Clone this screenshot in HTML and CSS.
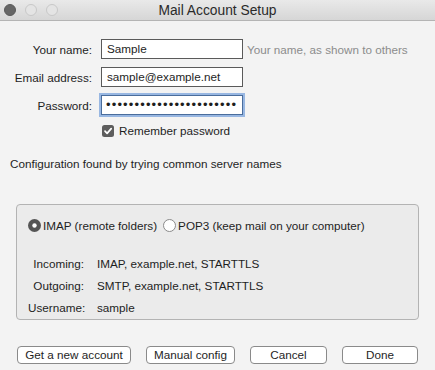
FILE: index.html
```html
<!DOCTYPE html>
<html>
<head>
<meta charset="utf-8">
<link rel="stylesheet" href="styles.css">
</head>
<body>
<div class="window">
  <div class="titlebar">
    <div class="lights">
      <span class="light close"></span>
      <span class="light"></span>
      <span class="light"></span>
    </div>
    <div class="title">Mail Account Setup</div>
  </div>
  <div class="content">
    <div class="form">
      <label class="lbl">Your name:</label>
      <div class="field">Sample</div>
      <div class="hint">Your name, as shown to others</div>
      <label class="lbl">Email address:</label>
      <div class="field">sample@example.net</div>
      <div></div>
      <label class="lbl">Password:</label>
      <div class="field focused dots">•••••••••••••••••••••••</div>
      <div></div>
      <div></div>
      <div class="check-row">
        <svg class="checkbox" width="12" height="12" viewBox="0 0 12 12"><rect x="0" y="0" width="12" height="12" rx="2.5" fill="#5d5d5d"/><path d="M3 6.2 L5.1 8.4 L9.2 3.6" fill="none" stroke="#fff" stroke-width="1.7" stroke-linecap="round" stroke-linejoin="round"/></svg>
        <span>Remember password</span>
      </div>
      <div></div>
    </div>
    <div class="status">Configuration found by trying common server names</div>
    <div class="group">
      <div class="radios">
        <div class="radio-item">
          <svg width="13" height="13" viewBox="0 0 13 13"><circle cx="6.5" cy="6.5" r="6.5" fill="#555"/><circle cx="6.5" cy="6.5" r="2.2" fill="#fff"/></svg>
          <span>IMAP (remote folders)</span>
        </div>
        <div class="radio-item">
          <svg width="13" height="13" viewBox="0 0 13 13"><circle cx="6.5" cy="6.5" r="6" fill="#fff" stroke="#8a8a8a" stroke-width="1"/></svg>
          <span>POP3 (keep mail on your computer)</span>
        </div>
      </div>
      <div class="details">
        <div class="dl">Incoming:</div><div>IMAP, example.net, STARTTLS</div>
        <div class="dl">Outgoing:</div><div>SMTP, example.net, STARTTLS</div>
        <div class="dl">Username:</div><div>sample</div>
      </div>
    </div>
    <div class="buttons">
      <button class="btn b1">Get a new account</button>
      <button class="btn b2">Manual config</button>
      <button class="btn b3">Cancel</button>
      <button class="btn b4">Done</button>
    </div>
  </div>
</div>
</body>
</html>
```
FILE: styles.css
```css
html, body {
  margin: 0;
  padding: 0;
  background: #f3f3f3;
}
body {
  font-family: "Liberation Sans", Arial, sans-serif;
  font-size: 11.7px;
  line-height: 15px;
  color: #1e1e1e;
  width: 435px;
  height: 370px;
  overflow: hidden;
}
.titlebar {
  height: 20px;
  border-bottom: 1px solid #b4b4b4;
  background: linear-gradient(#e9e9e9, #d6d6d6);
  display: flex;
  align-items: center;
  position: relative;
}
.lights {
  display: flex;
  gap: 9px;
  padding-left: 4px;
}
.light {
  width: 10px;
  height: 10px;
  border-radius: 50%;
  border: 1px solid #c8c8c8;
  background: #e4e4e4;
}
.light.close {
  background: #666;
  border-color: #5a5a5a;
}
.title {
  position: absolute;
  left: 0;
  right: 0;
  top: 0;
  line-height: 21px;
  text-align: center;
  color: #2a2a2a;
  font-size: 13.8px;
}
.content {
  padding-top: 18px;
}
.form {
  display: grid;
  grid-template-columns: 97px 142px 1fr;
  column-gap: 4px;
  row-gap: 8px;
  align-items: center;
}
.lbl {
  text-align: right;
  padding-right: 5px;
}
.field {
  height: 18px;
  border: 1px solid #5a5a5a;
  background: #fff;
  line-height: 18px;
  padding-left: 5px;
  white-space: nowrap;
  overflow: hidden;
}
.field.focused {
  border-color: #4a6d9c;
  box-shadow: 0 0 0 2px #98b7e2;
}
.field.dots {
  font-size: 13px;
  letter-spacing: 1.15px;
  padding-left: 4px;
}
.hint {
  color: #8c8c8c;
  white-space: nowrap;
}
.check-row {
  display: flex;
  align-items: center;
  gap: 5px;
  padding-left: 1px;
}
.status {
  margin-top: 18px;
  padding-left: 10px;
}
.group {
  margin: 33px 16px 0 16px;
  height: 116px;
  box-sizing: border-box;
  border: 1px solid #b3b3b3;
  border-radius: 4px;
  background: #ebebeb;
  padding: 14px 0 0 11px;
}
.radios {
  display: flex;
  gap: 6px;
  height: 13px;
  align-items: center;
}
.radio-item {
  display: flex;
  align-items: center;
  gap: 2px;
}
.details {
  display: grid;
  grid-template-columns: 56px 1fr;
  column-gap: 13px;
  margin-top: 21px;
  line-height: 22px;
}
.dl {
  text-align: right;
}
.buttons {
  display: flex;
  gap: 15px;
  margin: 26px 0 0 17px;
}
.btn {
  font-family: "Liberation Sans", Arial, sans-serif;
  font-size: 11.7px;
  color: #1e1e1e;
  height: 18px;
  padding: 0;
  background: #fff;
  border: 1px solid #8a8a8a;
  border-radius: 4px;
  line-height: 16px;
}
.b1 { width: 114px; }
.b2 { width: 89px; }
.b3 { width: 77px; }
.b4 { width: 76px; }
```
